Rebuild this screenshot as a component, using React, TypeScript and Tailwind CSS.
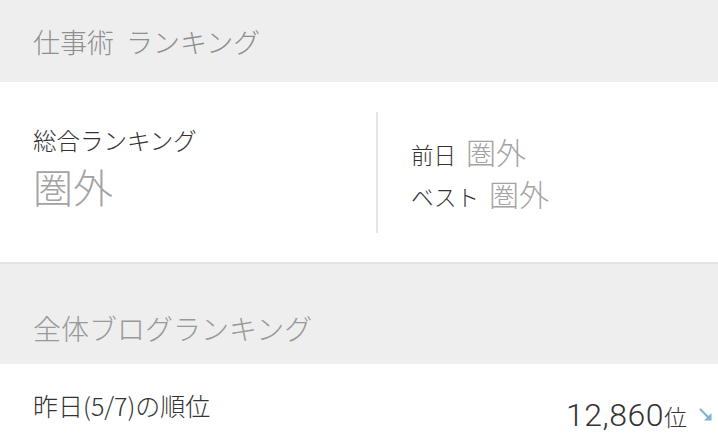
function TrendDown() {
  return (
    <svg width="14" height="14" viewBox="0 0 14 14" className="shrink-0">
      <path d="M1.5 1.5 L9.5 9.5" stroke="#7fb3d5" strokeWidth="2.2" strokeLinecap="round" />
      <path d="M12.5 5 L12.5 12.5 L5 12.5 Z" fill="#7fb3d5" />
    </svg>
  );
}

export default function App() {
  return (
    <div className="w-[718px] h-[444px] overflow-hidden bg-white font-['Noto_Sans_CJK_JP',sans-serif] font-light">
      <div className="h-[82px] bg-[#eeeeee] flex items-center pl-[33px] text-[27px] leading-none text-[#8f8f8f]">
        仕事術<span className="ml-[12px]">ランキング</span>
      </div>

      <div className="h-[182px] flex border-b-2 border-[#e3e3e3]">
        <div className="w-[376px] pl-[33px] pt-[47px]">
          <div className="text-[23.5px] leading-none text-[#333333]">総合ランキング</div>
          <div className="mt-[13px] text-[40px] leading-none text-[#a3a3a3]">圏外</div>
        </div>
        <div className="self-center h-[121px] border-l-2 border-[#e6e6e6] pl-[33px] pt-[24px] flex flex-col gap-[12px]">
          <div className="flex items-baseline gap-[10px]">
            <span className="text-[22.5px] leading-none text-[#333333]">前日</span>
            <span className="text-[30px] leading-none text-[#a3a3a3]">圏外</span>
          </div>
          <div className="flex items-baseline gap-[10px]">
            <span className="text-[22.5px] leading-none text-[#333333]">ベスト</span>
            <span className="text-[30px] leading-none text-[#a3a3a3]">圏外</span>
          </div>
        </div>
      </div>

      <div className="h-[100px] bg-[#eeeeee] pl-[33px] pt-[50px] text-[28px] leading-none text-[#999999]">
        全体ブログランキング
      </div>

      <div className="flex items-start justify-between pl-[33px] pr-[5px] pt-[29px] text-[#333333]">
        <span className="text-[25px] leading-none">昨日(5/7)の順位</span>
        <div className="mt-[6px] flex items-center gap-[12px]">
          <span className="leading-none">
            <span className="font-['Roboto',sans-serif] font-light text-[32px] tracking-[0.5px]">12,860</span>
            <span className="text-[23px]">位</span>
          </span>
          <TrendDown />
        </div>
      </div>
    </div>
  );
}
